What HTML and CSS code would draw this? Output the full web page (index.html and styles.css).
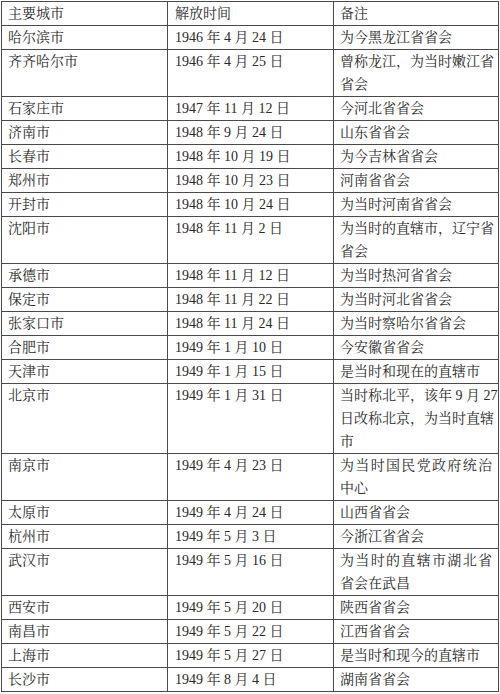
FILE: index.html
```html
<!DOCTYPE html>
<html lang="zh-CN">
<head>
<meta charset="utf-8">
<title>解放时间</title>
<link rel="stylesheet" href="styles.css">
</head>
<body>
<table class="tbl">
  <colgroup>
    <col class="c1"><col class="c2"><col class="c3">
  </colgroup>
  <tr><td>主要城市</td><td>解放时间</td><td>备注</td></tr>
  <tr><td>哈尔滨市</td><td>1946 年 4 月 24 日</td><td>为今黑龙江省省会</td></tr>
  <tr><td>齐齐哈尔市</td><td>1946 年 4 月 25 日</td><td><span class="jl">曾称龙江，为当时嫩江省</span><span class="ln">省会</span></td></tr>
  <tr><td>石家庄市</td><td>1947 年 11 月 12 日</td><td>今河北省省会</td></tr>
  <tr><td>济南市</td><td>1948 年 9 月 24 日</td><td>山东省省会</td></tr>
  <tr><td>长春市</td><td>1948 年 10 月 19 日</td><td>为今吉林省省会</td></tr>
  <tr><td>郑州市</td><td>1948 年 10 月 23 日</td><td>河南省省会</td></tr>
  <tr><td>开封市</td><td>1948 年 10 月 24 日</td><td>为当时河南省省会</td></tr>
  <tr><td>沈阳市</td><td>1948 年 11 月 2 日</td><td><span class="jl">为当时的直辖市，辽宁省</span><span class="ln">省会</span></td></tr>
  <tr><td>承德市</td><td>1948 年 11 月 12 日</td><td>为当时热河省省会</td></tr>
  <tr><td>保定市</td><td>1948 年 11 月 22 日</td><td>为当时河北省省会</td></tr>
  <tr><td>张家口市</td><td>1948 年 11 月 24 日</td><td>为当时察哈尔省省会</td></tr>
  <tr><td>合肥市</td><td>1949 年 1 月 10 日</td><td>今安徽省省会</td></tr>
  <tr><td>天津市</td><td>1949 年 1 月 15 日</td><td>是当时和现在的直辖市</td></tr>
  <tr><td>北京市</td><td>1949 年 1 月 31 日</td><td><span class="jl">当时称北平，该年 9 月 27</span><span class="jl">日改称北京，为当时直辖</span><span class="ln">市</span></td></tr>
  <tr><td>南京市</td><td>1949 年 4 月 23 日</td><td><span class="jl">为当时国民党政府统治</span><span class="ln">中心</span></td></tr>
  <tr><td>太原市</td><td>1949 年 4 月 24 日</td><td>山西省省会</td></tr>
  <tr><td>杭州市</td><td>1949 年 5 月 3 日</td><td>今浙江省省会</td></tr>
  <tr><td>武汉市</td><td>1949 年 5 月 16 日</td><td><span class="jl">为当时的直辖市湖北省</span><span class="ln">省会在武昌</span></td></tr>
  <tr><td>西安市</td><td>1949 年 5 月 20 日</td><td>陕西省省会</td></tr>
  <tr><td>南昌市</td><td>1949 年 5 月 22 日</td><td>江西省省会</td></tr>
  <tr><td>上海市</td><td>1949 年 5 月 27 日</td><td>是当时和现今的直辖市</td></tr>
  <tr><td>长沙市</td><td>1949 年 8 月 4 日</td><td>湖南省省会</td></tr>
</table>
</body>
</html>
```

FILE: styles.css
```css
html, body {
  margin: 0;
  padding: 0;
  background: #ffffff;
}

body {
  padding: 1px 0 0 1px;
  font-family: "Liberation Serif", "Noto Serif CJK SC", "Noto Sans CJK SC", serif;
  font-size: 14px;
  color: #2a2a2a;
}

.tbl {
  border-collapse: collapse;
  table-layout: fixed;
  width: 497px;
}

.c1 { width: 166px; }
.c2 { width: 166px; }
.c3 { width: 165px; }

.tbl td {
  border: 1px solid #4a4a4a;
  padding: 0 6px 0 6px;
  line-height: 23px;
  height: 23px;
  vertical-align: top;
  white-space: nowrap;
  overflow: hidden;
}

.tbl td:nth-child(2) {
  padding-left: 7px;
}

.tbl td:nth-child(3) {
  padding-left: 6px;
  padding-right: 6px;
}

.jl {
  display: block;
  text-align: justify;
  text-align-last: justify;
  text-justify: inter-character;
}

.ln {
  display: block;
}
```
